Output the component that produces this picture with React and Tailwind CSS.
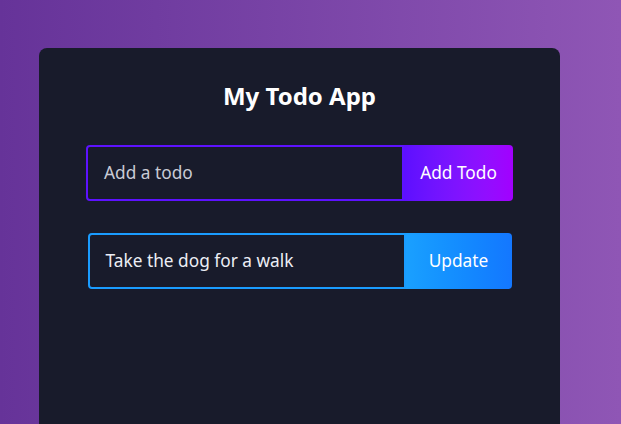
export default function App() {
  return (
    <div
      className="w-full h-[424px] overflow-hidden bg-gradient-to-r from-[#663399] to-[#8f56b5] pt-[48px] pl-[39px]"
      style={{ fontFamily: '"Noto Sans", sans-serif' }}
    >
      <div className="w-[521px] h-[420px] bg-[#181b2b] rounded-lg flex flex-col items-center pt-[80px]">
        <h1 className="text-[24px] leading-[32px] font-bold text-white -mt-[48px] mb-[33px]">My Todo App</h1>
        <div className="w-[427px] h-[56px] flex">
          <div className="flex-1 flex items-center border-2 border-[#5d12ff] rounded-l-[4px] pl-4 bg-[#181b2b]">
            <span className="text-[17.3px] text-[#c9cbd6]">Add a todo</span>
          </div>
          <button className="w-[109px] h-full rounded-r-[4px] bg-gradient-to-r from-[#5d0fff] to-[#a200ff] text-white text-[17.3px]">
            Add Todo
          </button>
        </div>
        <div className="w-[424px] h-[56px] flex mt-[32px]">
          <div className="flex-1 flex items-center border-2 border-[#1a9cff] rounded-l-[4px] pl-4 bg-[#181b2b]">
            <span className="text-[17.3px] text-[#eceef5]">Take the dog for a walk</span>
          </div>
          <button className="w-[106px] h-full rounded-r-[4px] bg-gradient-to-r from-[#1aa0ff] to-[#1477ff] text-white text-[17.3px]">
            Update
          </button>
        </div>
      </div>
    </div>
  );
}
